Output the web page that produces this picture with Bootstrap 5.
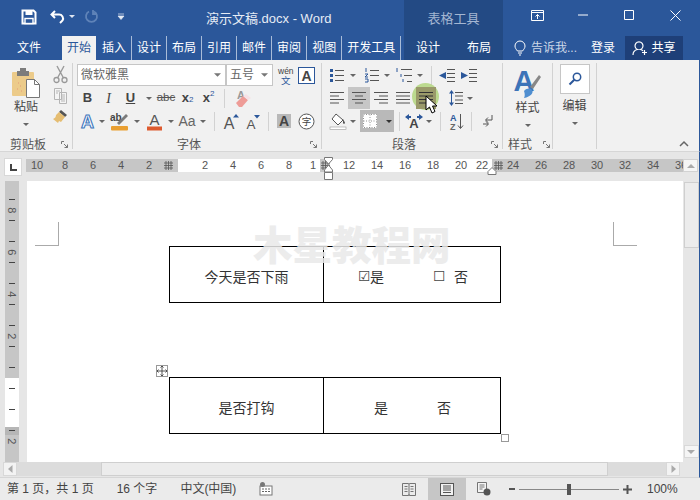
<!DOCTYPE html>
<html lang="zh">
<head>
<meta charset="utf-8">
<title>演示文稿.docx - Word</title>
<link href="https://cdn.jsdelivr.net/npm/bootstrap@5.3.0/dist/css/bootstrap.min.css" rel="stylesheet">
<style>
html,body{margin:0;height:500px;width:700px;overflow:hidden}
body{font-family:"Liberation Sans","Noto Sans CJK SC",sans-serif;font-size:12px;color:#444;background:#e8e8e8}
svg{display:block;flex:none;overflow:visible}
.hd{height:60px;background:#2b579a;color:#e6ecf5}
.hcol-l{width:404px}.hcol-c{width:99px;background:#234a84;color:#fff}.hcol-r{width:197px}
.hrow1{height:33px}.hrow2{height:27px}
.ttl{margin-left:81px;font-size:13px;margin-top:5px}
.ctx-t{color:#a4b6d2;font-size:13px;padding-top:9px}
.qa{padding-left:21px}
.qa1{margin-left:13px}.qa2{margin-left:4px}.qa3{margin-left:9px}.qa4{margin-left:19px}
.tbs{padding:3px 0 0 12px}
.tb{height:24px;padding:0 5px;line-height:24px;font-size:12px;color:#fff;position:relative;margin-right:1px;white-space:nowrap}
.tb.sp::after{content:"";position:absolute;right:-1px;top:0;height:24px;width:1px;background:#a9bcd8}
.tb.on{background:#f1f1f1;color:#2b579a}
.tb.first{margin-right:16px}
.ctxt{padding:3px 0 0 12px;gap:27px;line-height:24px;font-size:12px}
.wbs{padding-left:11px}
.wb{width:46px;height:30px}
.hr2{padding:3px 0 0 11px}
.tell{height:24px;gap:5px;width:77px;color:#cdd8e8}
.login{line-height:24px;width:34px;font-size:12px;color:#fff}
.share{background:#1e3f78;width:58px;height:24px;color:#fff;font-size:12px;gap:3px}
.rb-bar{height:92px;background:#f1f1f1;padding:3px 0;border-bottom:1px solid #d6d6d6;border-right:1px solid #2b579a;width:700px}
.grp{height:86px;border-right:1px solid #d2d2d2;display:flex;flex-direction:column;flex:none}
.g1{width:73px}.g2{width:249px;padding-left:4px}.g3{width:181px;padding-left:7px}.g4{width:50px}.g5{width:44px}
.gbody{flex:1 1 auto;min-height:0}
.lab{display:flex;justify-content:space-between;align-items:center;height:17px;padding-right:4px;color:#555;font-size:12px;flex:none;margin-top:4px;margin-bottom:-4px}
.l1{padding-left:10px}.l2{padding-left:100px}.l3{padding-left:63px}.l4{padding-left:5px;padding-right:2px}
.rr{display:flex;height:22px;align-items:center}
.rr+.rr{margin-top:1px}
.g2 .gbody{padding-top:1px}.g3 .gbody{padding-top:1px}
.ri{display:inline-flex;align-items:center;justify-content:center;flex:none;height:22px;color:#444}
.w3{width:3px}.w8{width:8px}.w10{width:10px}.w12{width:12px}.w13{width:13px}.w14{width:14px}.w15{width:15px}.w16{width:16px}.w17{width:17px}.w18{width:18px}.w19{width:19px}.w20{width:20px}.w21{width:21px}.w22{width:22px}.w23{width:23px}.w24{width:24px}.w25{width:25px}.w34{width:34px}
.vs::before{content:"";width:1px;height:19px;background:#d2d2d2}
.sel{background:#c6c6c6}
.sel2{background:#b9b9b9;gap:9px}
.ar{width:0;height:0;border-left:3px solid transparent;border-right:3px solid transparent;border-top:3px solid #666}
.ar2{border-top-color:#dfe6f1}
.ar3{border-top-color:#333}
.ltr{font-weight:700;font-size:13px;color:#444}
.ltr.it{font-style:italic;font-family:"Liberation Serif",serif;font-weight:400;font-size:14px}
.ltr.ab{font-size:11.5px;font-weight:400;color:#555}
.ltr sub,.ltr sup{font-size:8px;color:#2b579a;font-weight:400}
.aa{font-size:14px;color:#666}
.form-select.rsel{height:22px;font-size:12px;color:#666;padding:0 14px 0 3px;border-radius:0;border-color:#c6c6c6;background-image:url("data:image/svg+xml,%3Csvg xmlns='http://www.w3.org/2000/svg' viewBox='0 0 8 4'%3E%3Cpath d='M0 0h8L4 4z' fill='%23777'/%3E%3C/svg%3E");background-size:7px 4px;background-position:right 4px center;min-height:0;flex:none}
.fs1{width:149px}.fs2{width:47px;margin-right:3px}
.clip-l{width:52px;padding-top:5px}
.clip-r{gap:3px;padding-top:2px}
.bigl{font-size:12px;color:#444;line-height:16px}
.m1t{margin-top:1px}.m4t{margin-top:4px}
.ed{width:30px;height:30px;background:#fff;border:1px solid #c6c6c6;margin-top:1px}
.rest{flex:1 1 auto;padding:0 10px 1px 0}
.rulbar{height:29px;background:#e6e6e6;position:relative;border-right:1px solid #2b579a;padding-top:6px}
.corner{width:18px;height:18px;background:#fff;border:1px solid #d8d8d8;margin-left:4px;margin-right:4px;flex:none}
.rulr{height:13px;width:657px;flex:none;font-size:11px;color:#555;line-height:13px;margin-top:1px}
.s1{width:152px;background:#c6c6c6;overflow:hidden}
.s2{width:314px;background:#fff}
.s3{width:191px;background:#c6c6c6;overflow:hidden}
.t{width:28px;flex:none;text-align:center}
.t14{width:14px;flex:none;text-align:center}
.t18{width:18px;flex:none;text-align:center;margin-right:5px}
.m1{margin-left:-3px}.m2{margin-left:13px}.m3{margin-left:3px}.m4{margin-left:5px}
.gm{display:flex;align-items:center;justify-content:center;flex:none;width:10px;height:13px;background:#c6c6c6}
.gm.w12{width:12px}
.upb{width:15px;height:13px;background:#f5f5f5;border:1px solid #d2d2d2;margin-top:1px;margin-left:0;flex:none}
.flip{transform:rotate(180deg)}
.ind{position:absolute}
.ind1{left:324px;top:5px}.ind2{left:487px;top:15px}
.docrow{height:281px;background:#e6e6e6;border-right:1px solid #2b579a}
.vr-wrap{width:27px;padding-left:5px;flex:none}
.vrul{width:14px;height:281px;background:#c6c6c6;position:relative;overflow:hidden;font-size:11px;color:#555;display:flex;flex-direction:column;align-items:center;padding-top:13px}
.vw{position:absolute;left:0;top:197px;width:14px;height:49px;background:#fff}
.vd{position:absolute;left:0;top:246px;width:14px;height:8px;background:#b6b6b6}
.vc{height:10.5px;line-height:10.5px;position:relative;flex:none;display:flex;align-items:center;justify-content:center}
.vc.tk::before{content:"";width:6px;height:1px;background:#444}
.vc b{font-weight:400;transform:rotate(90deg);display:block}
.page{width:656px;background:#fff;position:relative;padding:65px 0 0 142px;flex:none;overflow:hidden}
.table.tbx{width:332px;table-layout:fixed;margin:0;border-color:#000;--bs-table-bg:transparent;font-family:"Noto Sans CJK SC",sans-serif;font-size:14px;color:#333}
.table.tbx td{border:1px solid #000;height:56px;padding:3px 0 0;vertical-align:middle;text-align:center}
.cl1{width:154px}
.table.tbx2{margin-top:74px}
.cbx{display:flex;align-items:center}
.c1{padding-left:34px}.c2{padding-left:50px}
.gl{font-family:"DejaVu Sans",sans-serif;font-size:14px;line-height:14px;width:12px;flex:none;text-align:left;color:#444}
.g10{margin-left:49px}.g11{margin-left:9px}.g49{margin-left:49px}
.mk{position:absolute;width:24px;height:24px;top:41px;border-bottom:1px solid #aaa}
.mk1{left:8px;border-right:1px solid #aaa}
.mk2{left:586px;border-left:1px solid #aaa}
.wm{position:absolute;left:226px;top:37px;font-family:"Noto Sans CJK SC",sans-serif;font-weight:900;font-size:39.5px;line-height:50px;color:#e9e9e9;opacity:.85;white-space:nowrap;letter-spacing:0}
.hm{position:absolute;left:129px;top:184px;width:12px;height:12px;border:1px solid #999;background:#fff}
.hrz{position:absolute;left:474px;top:253px;width:8px;height:8px;border:1px solid #999;background:#fff}
.vsb{width:16px;flex:none;position:relative;display:flex;flex-direction:column;align-items:center}
.vth{width:15px;height:66px;background:#ececec;border:1px solid #cfcfcf;margin-top:1px}
.vdn{width:15px;height:13px;background:#f5f5f5;border:1px solid #d8d8d8;margin-top:197px;display:flex;align-items:center;justify-content:center}
.ar-g{width:0;height:0;border-left:4px solid transparent;border-right:4px solid transparent;border-top:4px solid #aaa}
.hsb{height:16px;background:#e6e6e6;border-right:1px solid #2b579a;padding-left:3px;border-bottom:1px solid #d6d6d6}
.hb{width:14px;height:14px;background:#f3f3f3;border:1px solid #d8d8d8;flex:none;display:flex;align-items:center;justify-content:center}
.htr{background:#dcdcdc;height:14px;flex:none}
.htr1{width:84px}.htr2{width:58px}
.hth{width:507px;height:14px;background:#ececec;border:1px solid #cfcfcf;flex:none}
.stb{height:22px;background:#ebebeb;font-size:12px;color:#444;padding-left:7px;width:700px}
.st1{margin-right:23px;white-space:nowrap}
.vbtn{width:38px;height:22px;flex:none;margin-left:12px}
.sw1{margin-left:11px}.sw2{margin-left:18px}.sw3{margin-left:1px}
.sl{width:100px;height:1px;background:#888;position:relative;margin:0 3px 0 4px}
.th{position:absolute;left:48px;top:-5px;width:4px;height:11px;background:#555}
.pct{margin:0 21px 0 15px;width:32px}
.glow{position:absolute;left:412px;top:83px;width:27px;height:27px;border-radius:50%;background:rgba(170,210,110,.75)}
.hdist{position:absolute;left:416px;top:87px;width:20px;height:22px;background:#9a9a6a}
.cur{position:absolute;left:425px;top:95px}
</style>
</head>
<body>
<header class="hd d-flex">
  <div class="hcol-l">
    <div class="hrow1 d-flex align-items-center qa">
      <svg width="16" height="16" viewBox="0 0 16 16"><path d="M1.5 1.5h11l2 2v11h-13z" fill="none" stroke="#fff" stroke-width="2"/><rect x="4.5" y="2" width="7" height="4" fill="#fff"/><rect x="4" y="9.5" width="8" height="5" fill="#2b579a" stroke="#fff" stroke-width="1.4"/></svg>
      <svg class="qa1" width="15" height="14" viewBox="0 0 15 14"><path d="M5 1 1.5 4.500 5 8M2 4.500h7a4 4 0 0 1 3.500 6L10 13" fill="none" stroke="#fff" stroke-width="2"/></svg>
      <span class="ar ar2 qa2"></span>
      <svg class="qa3" width="15" height="15" viewBox="0 0 15 15"><path d="M10 2.500a5.500 5.500 0 1 1-5 0M9 1v4h4" fill="none" stroke="#5f83b8" stroke-width="1.800"/></svg>
      <svg class="qa4" width="7" height="7" viewBox="0 0 7 7"><path d="M0 1h6M0 3h6L3 6.500z" fill="#e6ecf5" stroke="#e6ecf5" stroke-width=".7"/></svg>
      <span class="ttl">演示文稿.docx - Word</span>
    </div>
    <nav class="hrow2 d-flex tbs">
      <span class="tb first">文件</span>
      <span class="tb on">开始</span>
      <span class="tb sp">插入</span>
      <span class="tb sp">设计</span>
      <span class="tb sp">布局</span>
      <span class="tb sp">引用</span>
      <span class="tb sp">邮件</span>
      <span class="tb sp">审阅</span>
      <span class="tb sp">视图</span>
      <span class="tb sp">开发工具</span>
    </nav>
  </div>
  <div class="hcol-c">
    <div class="hrow1 text-center ctx-t">表格工具</div>
    <div class="hrow2 d-flex ctxt"><span>设计</span><span>布局</span></div>
  </div>
  <div class="hcol-r">
    <div class="hrow1 d-flex wbs">
      <span class="wb d-flex align-items-center justify-content-center"><svg width="13" height="11" viewBox="0 0 13 11"><path d="M.5.500h12v10H.5zM.5 2.500h12M6.500 9V4.500M4.500 6.500l2-2 2 2" fill="none" stroke="#fff"/></svg></span>
      <span class="wb d-flex align-items-center justify-content-center"><svg width="10" height="2" viewBox="0 0 10 2"><path d="M0 1h10" stroke="#fff"/></svg></span>
      <span class="wb d-flex align-items-center justify-content-center"><svg width="10" height="10" viewBox="0 0 10 10"><path d="M.5.500h9v9h-9z" fill="none" stroke="#fff"/></svg></span>
      <span class="wb d-flex align-items-center justify-content-center"><svg width="11" height="11" viewBox="0 0 11 11"><path d="M.5.500l10 10M10.500.500l-10 10" stroke="#fff"/></svg></span>
    </div>
    <div class="hrow2 d-flex align-items-start hr2">
      <span class="d-flex align-items-center tell"><svg width="12" height="16" viewBox="0 0 12 16"><path d="M3.500 11C2 9 1 8 1 6a5 5 0 0 1 10 0c0 2-1 3-2.500 5zM4 13h4M5 15h2" fill="none" stroke="#fff"/></svg><span>告诉我...</span></span>
      <span class="login">登录</span>
      <span class="share d-flex align-items-center justify-content-center"><svg width="16" height="16" viewBox="0 0 16 16"><path d="M1 15c0-3 2-5 4.500-5.500a4 4 0 1 1 3 0c1 .2 1.800.6 2.500 1.200M12.500 10v5M10 12.500h5" fill="none" stroke="#fff" stroke-width="1.200"/></svg>共享</span>
    </div>
  </div>
</header>

<section class="rb-bar d-flex">
  <div class="grp g1">
    <div class="gbody d-flex">
      <div class="clip-l d-flex flex-column align-items-center">
        <svg width="30" height="31" viewBox="0 0 30 31"><rect x="1" y="4" width="22" height="24" rx="1" fill="#eccb8a"/><rect x="6" y="3" width="12" height="5" fill="#7c7c7c"/><rect x="9" y="0" width="6" height="4" fill="#7c7c7c"/><path d="M15.500 11.500h8l5 5v13h-13z" fill="#fff" stroke="#777"/><path d="M23.500 11.500v5h5" fill="none" stroke="#777"/><path d="M7 15h1M9 18h1M6 21h1M10 23h1" stroke="#e39a7a"/></svg>
        <span class="bigl">粘贴</span>
        <span class="ar mt-2"></span>
      </div>
      <div class="clip-r d-flex flex-column align-items-center">
        <svg width="15" height="19" viewBox="0 0 15 19"><circle cx="3.500" cy="15" r="2.500" fill="none" stroke="#999" stroke-width="1.300"/><circle cx="11.500" cy="15" r="2.500" fill="none" stroke="#999" stroke-width="1.300"/><path d="M4.500 13 11 1M10.500 13 4 1" stroke="#999" stroke-width="1.400"/></svg>
        <svg width="15" height="18" viewBox="0 0 15 18"><path d="M1.500 1.500h7v11h-7zM6.500 5.500h7v11h-7zM3 4h4M3 6h2M8 8h4M8 10h4M8 12h4M8 14h4" fill="#f4f4f4" stroke="#b5b5b5"/></svg>
        <svg width="17" height="17" viewBox="0 0 17 17"><path d="M9 2l6 5-2 2-6-5z" fill="#555"/><path d="M7 4l6 5-4 5-2-1-1 2-5-4c2-1 3-2 3-4z" fill="#e5bd72"/></svg>
      </div>
    </div>
    <div class="lab l1"><span>剪贴板</span><svg width="7" height="7" viewBox="0 0 7 7"><path d="M.5 3V.5H3M6.500 6.500 3 3M6.500 3.500v3h-3" fill="none" stroke="#777"/></svg></div>
  </div>

  <div class="grp g2">
    <div class="gbody">
      <div class="rr">
        <select class="form-select rsel fs1" aria-label="字体"><option>微软雅黑</option></select>
        <select class="form-select rsel fs2" aria-label="字号"><option>五号</option></select>
        <span class="ri w19"><svg width="17" height="19" viewBox="0 0 17 19"><text x="1" y="8" font-size="8.500" fill="#444" font-family="Liberation Sans">wén</text><text x="4" y="18" font-size="9.500" fill="#2b579a" font-family="Noto Sans CJK SC">文</text></svg></span>
        <span class="ri w3"></span>
        <span class="ri w17"><svg width="17" height="17" viewBox="0 0 17 17"><rect x=".5" y=".5" width="16" height="16" fill="#fff" stroke="#2b579a"/><text x="8.500" y="14" text-anchor="middle" font-size="14" font-weight="700" fill="#444" font-family="Liberation Sans">A</text></svg></span>
      </div>
      <div class="rr">
        <span class="ri w21 ltr">B</span>
        <span class="ri w21 ltr it">I</span>
        <span class="ri w23 ltr text-decoration-underline">U</span>
        <span class="ri w13"><i class="ar"></i></span>
        <span class="ri w22 ltr ab text-decoration-line-through">abc</span>
        <span class="ri w21 ltr">x<sub>2</sub></span>
        <span class="ri w21 ltr">x<sup>2</sup></span>
        <span class="ri w10 vs"></span>
        <span class="ri w3"></span>
        <span class="ri w22"><svg width="18" height="19" viewBox="0 0 18 19"><text x="3" y="10" font-size="11" fill="#999" font-weight="700" font-family="Liberation Sans">A</text><path d="M2 14l7-7 5 4-6 7H5z" fill="#ee9c97"/><path d="M9 7l3-2 5 4-3 2z" fill="#f6e2e6"/></svg></span>
      </div>
      <div class="rr">
        <span class="ri w20"><svg width="17" height="17" viewBox="0 0 17 17"><text x="8.500" y="15" text-anchor="middle" font-size="18" font-weight="700" fill="#fff" stroke="#3f77bd" stroke-width="1.100" font-family="Liberation Sans">A</text></svg></span>
        <span class="ri w10"><i class="ar"></i></span>
        <span class="ri w25"><svg width="20" height="19" viewBox="0 0 20 19"><text x="0" y="9" font-size="10" font-weight="700" fill="#444" font-family="Liberation Sans">ab</text><path d="M7 11l9-9 2 2-9 9z" fill="#7b7b7b"/><rect x="1" y="14" width="17" height="4.500" rx="1" fill="#e99f31"/></svg></span>
        <span class="ri w10"><i class="ar"></i></span>
        <span class="ri w24"><svg width="17" height="19" viewBox="0 0 17 19"><text x="8.500" y="13" text-anchor="middle" font-size="15" fill="#555" font-family="Liberation Sans">A</text><rect x="1" y="14.500" width="15" height="4" fill="#dd5a2f"/></svg></span>
        <span class="ri w10"><i class="ar"></i></span>
        <span class="ri w22 aa">Aa</span>
        <span class="ri w10"><i class="ar"></i></span>
        <span class="ri w12 vs"></span>
        <span class="ri w22"><svg width="17" height="17" viewBox="0 0 17 17"><text x="6" y="16" text-anchor="middle" font-size="16" fill="#555" font-family="Liberation Sans">A</text><path d="M10 4.500h6L13 1z" fill="#2b579a"/></svg></span>
        <span class="ri w22"><svg width="16" height="15" viewBox="0 0 16 15"><text x="6" y="14.500" text-anchor="middle" font-size="13.500" fill="#555" font-family="Liberation Sans">A</text><path d="M9 1h6l-3 3.500z" fill="#2b579a"/></svg></span>
        <span class="ri w8 vs"></span>
        <span class="ri w24"><svg width="14" height="14" viewBox="0 0 14 14"><rect width="14" height="14" fill="#b9b9b9"/><text x="7" y="12" text-anchor="middle" font-size="14" font-weight="700" fill="#444" font-family="Liberation Sans">A</text></svg></span>
        <span class="ri w20"><svg width="17" height="17" viewBox="0 0 17 17"><circle cx="8.500" cy="8.500" r="7.500" fill="#fff" stroke="#555"/><text x="8.500" y="12" text-anchor="middle" font-size="9.500" fill="#444" font-family="Noto Sans CJK SC">字</text></svg></span>
      </div>
    </div>
    <div class="lab l2"><span>字体</span><svg width="7" height="7" viewBox="0 0 7 7"><path d="M.5 3V.5H3M6.500 6.500 3 3M6.500 3.500v3h-3" fill="none" stroke="#777"/></svg></div>
  </div>

  <div class="grp g3">
    <div class="gbody">
      <div class="rr">
        <span class="ri w15"><svg width="14" height="15" viewBox="0 0 14 15"><path d="M5 2.500h9M5 7.500h9M5 12.500h9" stroke="#555"/><path d="M0 1h3v3H0zM0 6h3v3H0zM0 11h3v3H0z" fill="#2b579a"/></svg></span>
        <span class="ri w18"><i class="ar"></i></span>
        <span class="ri w18"><svg width="15" height="15" viewBox="0 0 15 15"><path d="M6 2.500h9M6 7.500h9M6 12.500h9" stroke="#555"/><path d="M2 0v4M1 6h3L1 9h3M1 11h3v3H1" fill="none" stroke="#2b579a"/></svg></span>
        <span class="ri w14"><i class="ar"></i></span>
        <span class="ri w20"><svg width="16" height="15" viewBox="0 0 16 15"><path d="M5 1.500h11M8 7.500h8M11 13.500h5" stroke="#555"/><path d="M1 0v4M5 6v3M7 11v3" stroke="#2b579a"/></svg></span>
        <span class="ri w12"><i class="ar"></i></span>
        <span class="ri w10 vs"></span>
        <span class="ri w22"><svg width="16" height="13" viewBox="0 0 16 13"><path d="M8 .5h8M8 4.500h8M8 8.500h8M8 12.500h8" stroke="#555"/><path d="M7 3v7L0 6.500z" fill="#2b579a"/></svg></span>
        <span class="ri w22"><svg width="16" height="13" viewBox="0 0 16 13"><path d="M8 .5h8M8 4.500h8M8 8.500h8M8 12.500h8" stroke="#555"/><path d="M0 3v7l7-3.500z" fill="#2b579a"/></svg></span>
      </div>
      <div class="rr">
        <span class="ri w16"><svg width="14" height="12" viewBox="0 0 14 12"><path d="M0 .5h14M0 4h9M0 7.500h14M0 11h9" stroke="#555"/></svg></span>
        <span class="ri w3"></span>
        <span class="ri w22 sel"><svg width="14" height="12" viewBox="0 0 14 12"><path d="M0 .5h14M3 4h8M0 7.500h14M3 11h8" stroke="#555"/></svg></span>
        <span class="ri w22"><svg width="14" height="12" viewBox="0 0 14 12"><path d="M0 .5h14M5 4h9M0 7.500h14M5 11h9" stroke="#555"/></svg></span>
        <span class="ri w22"><svg width="14" height="12" viewBox="0 0 14 12"><path d="M0 .5h14M0 4h14M0 7.500h14M0 11h14" stroke="#555"/></svg></span>
        <span class="ri w23"></span>
        <span class="ri w12"></span>
        <span class="ri w14"><svg width="14" height="16" viewBox="0 0 14 16"><path d="M6 2.500h8M6 6h8M6 10h8M6 13.500h8" stroke="#555"/><path d="M2.500 0l2.500 3.500H0zM2.500 16 0 12.500h5zM2 3h1v10H2z" fill="#2b579a"/></svg></span>
        <span class="ri w14"><i class="ar"></i></span>
      </div>
      <div class="rr">
        <span class="ri w17"><svg width="16" height="17" viewBox="0 0 16 17"><path d="M6 1l7 6-5 5-6-6z" fill="#fff" stroke="#555"/><path d="M13 6c1 2 2 3 2 4s-2 1-2 0z" fill="#555"/><rect x="0" y="14" width="16" height="2.500" fill="#fff" stroke="#999" stroke-width=".6"/></svg></span>
        <span class="ri w14"><i class="ar"></i></span>
        <span class="ri w34 sel2"><svg width="14" height="14" viewBox="0 0 14 14"><rect width="14" height="14" fill="#fff"/><path d="M.5.5h13v13H.5zM7 .5v13M.5 7h13" fill="none" stroke="#777" stroke-width=".8" stroke-dasharray="1 1.500"/></svg><i class="ar ar3"></i></span>
        <span class="ri w10 vs"></span>
        <span class="ri w20"><svg width="18" height="16" viewBox="0 0 18 16"><text x="9" y="15" text-anchor="middle" font-size="13" font-weight="700" fill="#444" font-family="Liberation Sans">A</text><path d="M0 4l4-3v2h2v2H4v2zM18 4l-4-3v2h-2v2h2v2z" fill="#2b579a"/></svg></span>
        <span class="ri w10"><i class="ar"></i></span>
        <span class="ri w13 vs"></span>
        <span class="ri w19"><svg width="14" height="17" viewBox="0 0 14 17"><text x="0" y="8" font-size="9" font-weight="700" fill="#2b579a" font-family="Liberation Sans">A</text><text x="0" y="17" font-size="9" font-weight="700" fill="#666" font-family="Liberation Sans">Z</text><path d="M10.500 1v14M8 12.500l2.500 3 2.500-3" fill="none" stroke="#555"/></svg></span>
        <span class="ri w10 vs"></span>
        <span class="ri w23"><svg width="11" height="14" viewBox="0 0 11 14"><path d="M10 1v5H4M6 3.500 3.500 6 6 8.500M1 10h5M4 7.500 6.500 10 4 12.500" fill="none" stroke="#555"/></svg></span>
      </div>
    </div>
    <div class="lab l3"><span>段落</span><svg width="7" height="7" viewBox="0 0 7 7"><path d="M.5 3V.5H3M6.500 6.500 3 3M6.500 3.500v3h-3" fill="none" stroke="#777"/></svg></div>
  </div>

  <div class="grp g4">
    <div class="gbody d-flex flex-column align-items-center pt-1">
      <svg width="29" height="32" viewBox="0 0 29 32"><text x="11" y="24" text-anchor="middle" font-size="29" font-weight="700" fill="#3d74b8" font-family="Liberation Sans">A</text><path d="M17 20 26 8l2 2-8 12z" fill="#888"/><path d="M11 24c3-3 6-3 8-1s-1 7-8 8c1-2 1-4 0-7z" fill="#4f8ed0"/></svg>
      <span class="bigl m1t">样式</span>
      <span class="ar mt-2"></span>
    </div>
    <div class="lab l4"><span>样式</span><svg width="7" height="7" viewBox="0 0 7 7"><path d="M.5 3V.5H3M6.500 6.500 3 3M6.500 3.500v3h-3" fill="none" stroke="#777"/></svg></div>
  </div>

  <div class="grp g5">
    <div class="gbody d-flex flex-column align-items-center">
      <div class="ed d-flex align-items-center justify-content-center"><svg width="14" height="14" viewBox="0 0 14 14"><circle cx="9" cy="5" r="3.700" fill="none" stroke="#2b579a" stroke-width="1.500"/><path d="M6.300 7.700 1.500 12.500" stroke="#2b579a" stroke-width="2"/></svg></div>
      <span class="bigl m4t">编辑</span>
      <span class="ar mt-2"></span>
    </div>
  </div>

  <div class="rest d-flex justify-content-end align-items-end"><svg width="10" height="6" viewBox="0 0 10 6"><path d="M1 5l4-4 4 4" fill="none" stroke="#666" stroke-width="1.500"/></svg></div>
</section>

<section class="rulbar d-flex">
  <div class="corner d-flex align-items-center justify-content-center"><svg width="7" height="7" viewBox="0 0 7 7"><path d="M1 0v6h6" fill="none" stroke="#444" stroke-width="2"/></svg></div>
  <div class="rulr d-flex">
    <div class="s1 d-flex">
      <span class="t m1">10</span><span class="t">8</span><span class="t">6</span><span class="t">4</span><span class="t">2</span>
      <span class="gm"><svg width="9" height="9" viewBox="0 0 9 9"><path d="M2 0v9M4.500 0v9M7 0v9M0 2h9M0 4.500h9M0 7h9" stroke="#555" stroke-width=".8"/></svg></span>
    </div>
    <div class="s2 d-flex">
      <span class="t m2">2</span><span class="t">4</span><span class="t">6</span><span class="t">8</span><span class="t14 m3">1</span>
      <span class="gm"><svg width="9" height="9" viewBox="0 0 9 9"><path d="M2 0v9M4.500 0v9M7 0v9M0 2h9M0 4.500h9M0 7h9" stroke="#555" stroke-width=".8"/></svg></span>
      <span class="t m4">12</span><span class="t">14</span><span class="t">16</span><span class="t">18</span><span class="t">20</span><span class="t14">22</span>
    </div>
    <div class="s3 d-flex">
      <span class="gm w12"><svg width="9" height="9" viewBox="0 0 9 9"><path d="M2 0v9M4.500 0v9M7 0v9M0 2h9M0 4.500h9M0 7h9" stroke="#555" stroke-width=".8"/></svg></span>
      <span class="t18">24</span><span class="t">26</span><span class="t">28</span><span class="t">30</span><span class="t">32</span><span class="t">34</span><span class="t">36</span>
    </div>
  </div>
  <div class="upb d-flex align-items-center justify-content-center"><i class="ar-g flip"></i></div>
  <svg class="ind ind1" width="10" height="24" viewBox="0 0 10 24"><path d="M.5.500h8v2L4.500 7l-4-4.500zM4.500 8l4 5v2h-8v-2zM.5 15.500h8v7h-8z" fill="#fff" stroke="#777"/></svg>
  <svg class="ind ind2" width="10" height="8" viewBox="0 0 10 8"><path d="M5 .5l4 4v3H1v-3z" fill="#fff" stroke="#777"/></svg>
</section>

<main class="docrow d-flex">
  <div class="vr-wrap">
    <div class="vrul">
      <span class="vw"></span><span class="vd"></span>
      <span class="vc tk"></span><span class="vc"><b>8</b></span><span class="vc tk"></span><span class="vc"></span>
      <span class="vc tk"></span><span class="vc"><b>6</b></span><span class="vc tk"></span><span class="vc"></span>
      <span class="vc tk"></span><span class="vc"><b>4</b></span><span class="vc tk"></span><span class="vc"></span>
      <span class="vc tk"></span><span class="vc"><b>2</b></span><span class="vc tk"></span><span class="vc"></span>
      <span class="vc tk"></span><span class="vc"></span><span class="vc tk"></span><span class="vc"></span>
      <span class="vc tk"></span><span class="vc"></span><span class="vc tk"></span><span class="vc"><b>2</b></span>
      <span class="vc"></span><span class="vc"></span><span class="vc"></span>
      <span class="vc tk"></span><span class="vc"></span><span class="vc tk"></span>
    </div>
  </div>
  <div class="page">
    <table class="table tbx">
      <colgroup><col class="cl1"><col></colgroup>
      <tr><td>今天是否下雨</td><td><div class="cbx c1"><span class="gl">☑</span><span>是</span><span class="gl g10">☐</span><span class="g11">否</span></div></td></tr>
    </table>
    <table class="table tbx tbx2">
      <colgroup><col class="cl1"><col></colgroup>
      <tr><td>是否打钩</td><td><div class="cbx c2"><span>是</span><span class="g49">否</span></div></td></tr>
    </table>
    <span class="mk mk1"></span><span class="mk mk2"></span>
    <span class="wm">木星教程网</span>
    <span class="hm d-flex align-items-center justify-content-center"><svg width="10" height="10" viewBox="0 0 10 10"><path d="M5 0v10M0 5h10M3.500 1.500 5 0l1.500 1.500M3.500 8.500 5 10l1.500-1.500M1.500 3.500 0 5l1.500 1.500M8.500 3.500 10 5 8.500 6.500" fill="none" stroke="#444" stroke-width=".9"/></svg></span>
    <span class="hrz"></span>
  </div>
  <div class="vsb">
    <div class="vth"></div>
    <div class="vdn"><i class="ar-g"></i></div>
  </div>
</main>

<section class="hsb d-flex">
  <div class="hb"><svg width="5" height="8" viewBox="0 0 5 8"><path d="M4.500 0v8L0 4z" fill="#aaa"/></svg></div>
  <div class="htr htr1"></div>
  <div class="hth"></div>
  <div class="htr htr2"></div>
  <div class="hb"><svg width="5" height="8" viewBox="0 0 5 8"><path d="M.5 0v8L5 4z" fill="#aaa"/></svg></div>
</section>

<footer class="stb d-flex align-items-center">
  <span class="st1">第 1 页，共 1 页</span>
  <span class="st1">16 个字</span>
  <span class="st1">中文(中国)</span>
  <svg width="14" height="14" viewBox="0 0 14 14"><rect x="1" y="4" width="12" height="9" fill="#fff" stroke="#777"/><rect x="1" y="0" width="5" height="5" rx="2.500" fill="#777"/><path d="M3 7h2M6 7h2M9 7h2M3 9.500h2M6 9.500h2M9 9.500h2" stroke="#666"/></svg>
  <span class="flex-grow-1"></span>
  <svg width="14" height="13" viewBox="0 0 14 13"><path d="M.5.5h6l.5 1 .5-1h6v12h-6l-.5-1-.5 1h-6zM7 1.500v11M2.500 3.500h3M2.500 6h3M2.500 8.500h3M8.500 3.500h3M8.500 6h3M8.500 8.500h3" fill="none" stroke="#666" stroke-width=".9"/></svg>
  <span class="vbtn sel d-flex align-items-center justify-content-center"><svg width="14" height="13" viewBox="0 0 14 13"><rect x=".5" y=".5" width="13" height="12" fill="#f1f1f1" stroke="#555"/><path d="M3 3h8M3 5h8M3 7h8M3 9.500h8" stroke="#555"/></svg></span>
  <svg class="sw1" width="14" height="14" viewBox="0 0 14 14"><path d="M.5.500h9v10h-9zM2.500 3h5M2.500 5h5M2.500 7h3" fill="#f4f4f4" stroke="#666" stroke-width=".9"/><circle cx="10" cy="10" r="3.500" fill="#555"/></svg>
  <svg class="sw2" width="6" height="3" viewBox="0 0 6 3"><rect width="6" height="2" fill="#555"/></svg>
  <span class="sl"><span class="th"></span></span>
  <svg class="sw3" width="9" height="9" viewBox="0 0 9 9"><path d="M0 3.500h9v2H0zM3.500 0h2v9h-2z" fill="#555"/></svg>
  <span class="pct">100%</span>
</footer>

<div class="glow"></div>
<div class="hdist d-flex align-items-center justify-content-center"><svg width="14" height="12" viewBox="0 0 14 12"><path d="M0 .5h14M0 4h14M0 7.500h14M0 11h14" stroke="#333"/></svg></div>
<svg class="cur" width="14" height="19" viewBox="0 0 14 19"><path d="M1 1v14l3.500-3 2.500 6 3-1.500L7.500 11H12z" fill="#fff" stroke="#000"/></svg>
</body>
</html>
